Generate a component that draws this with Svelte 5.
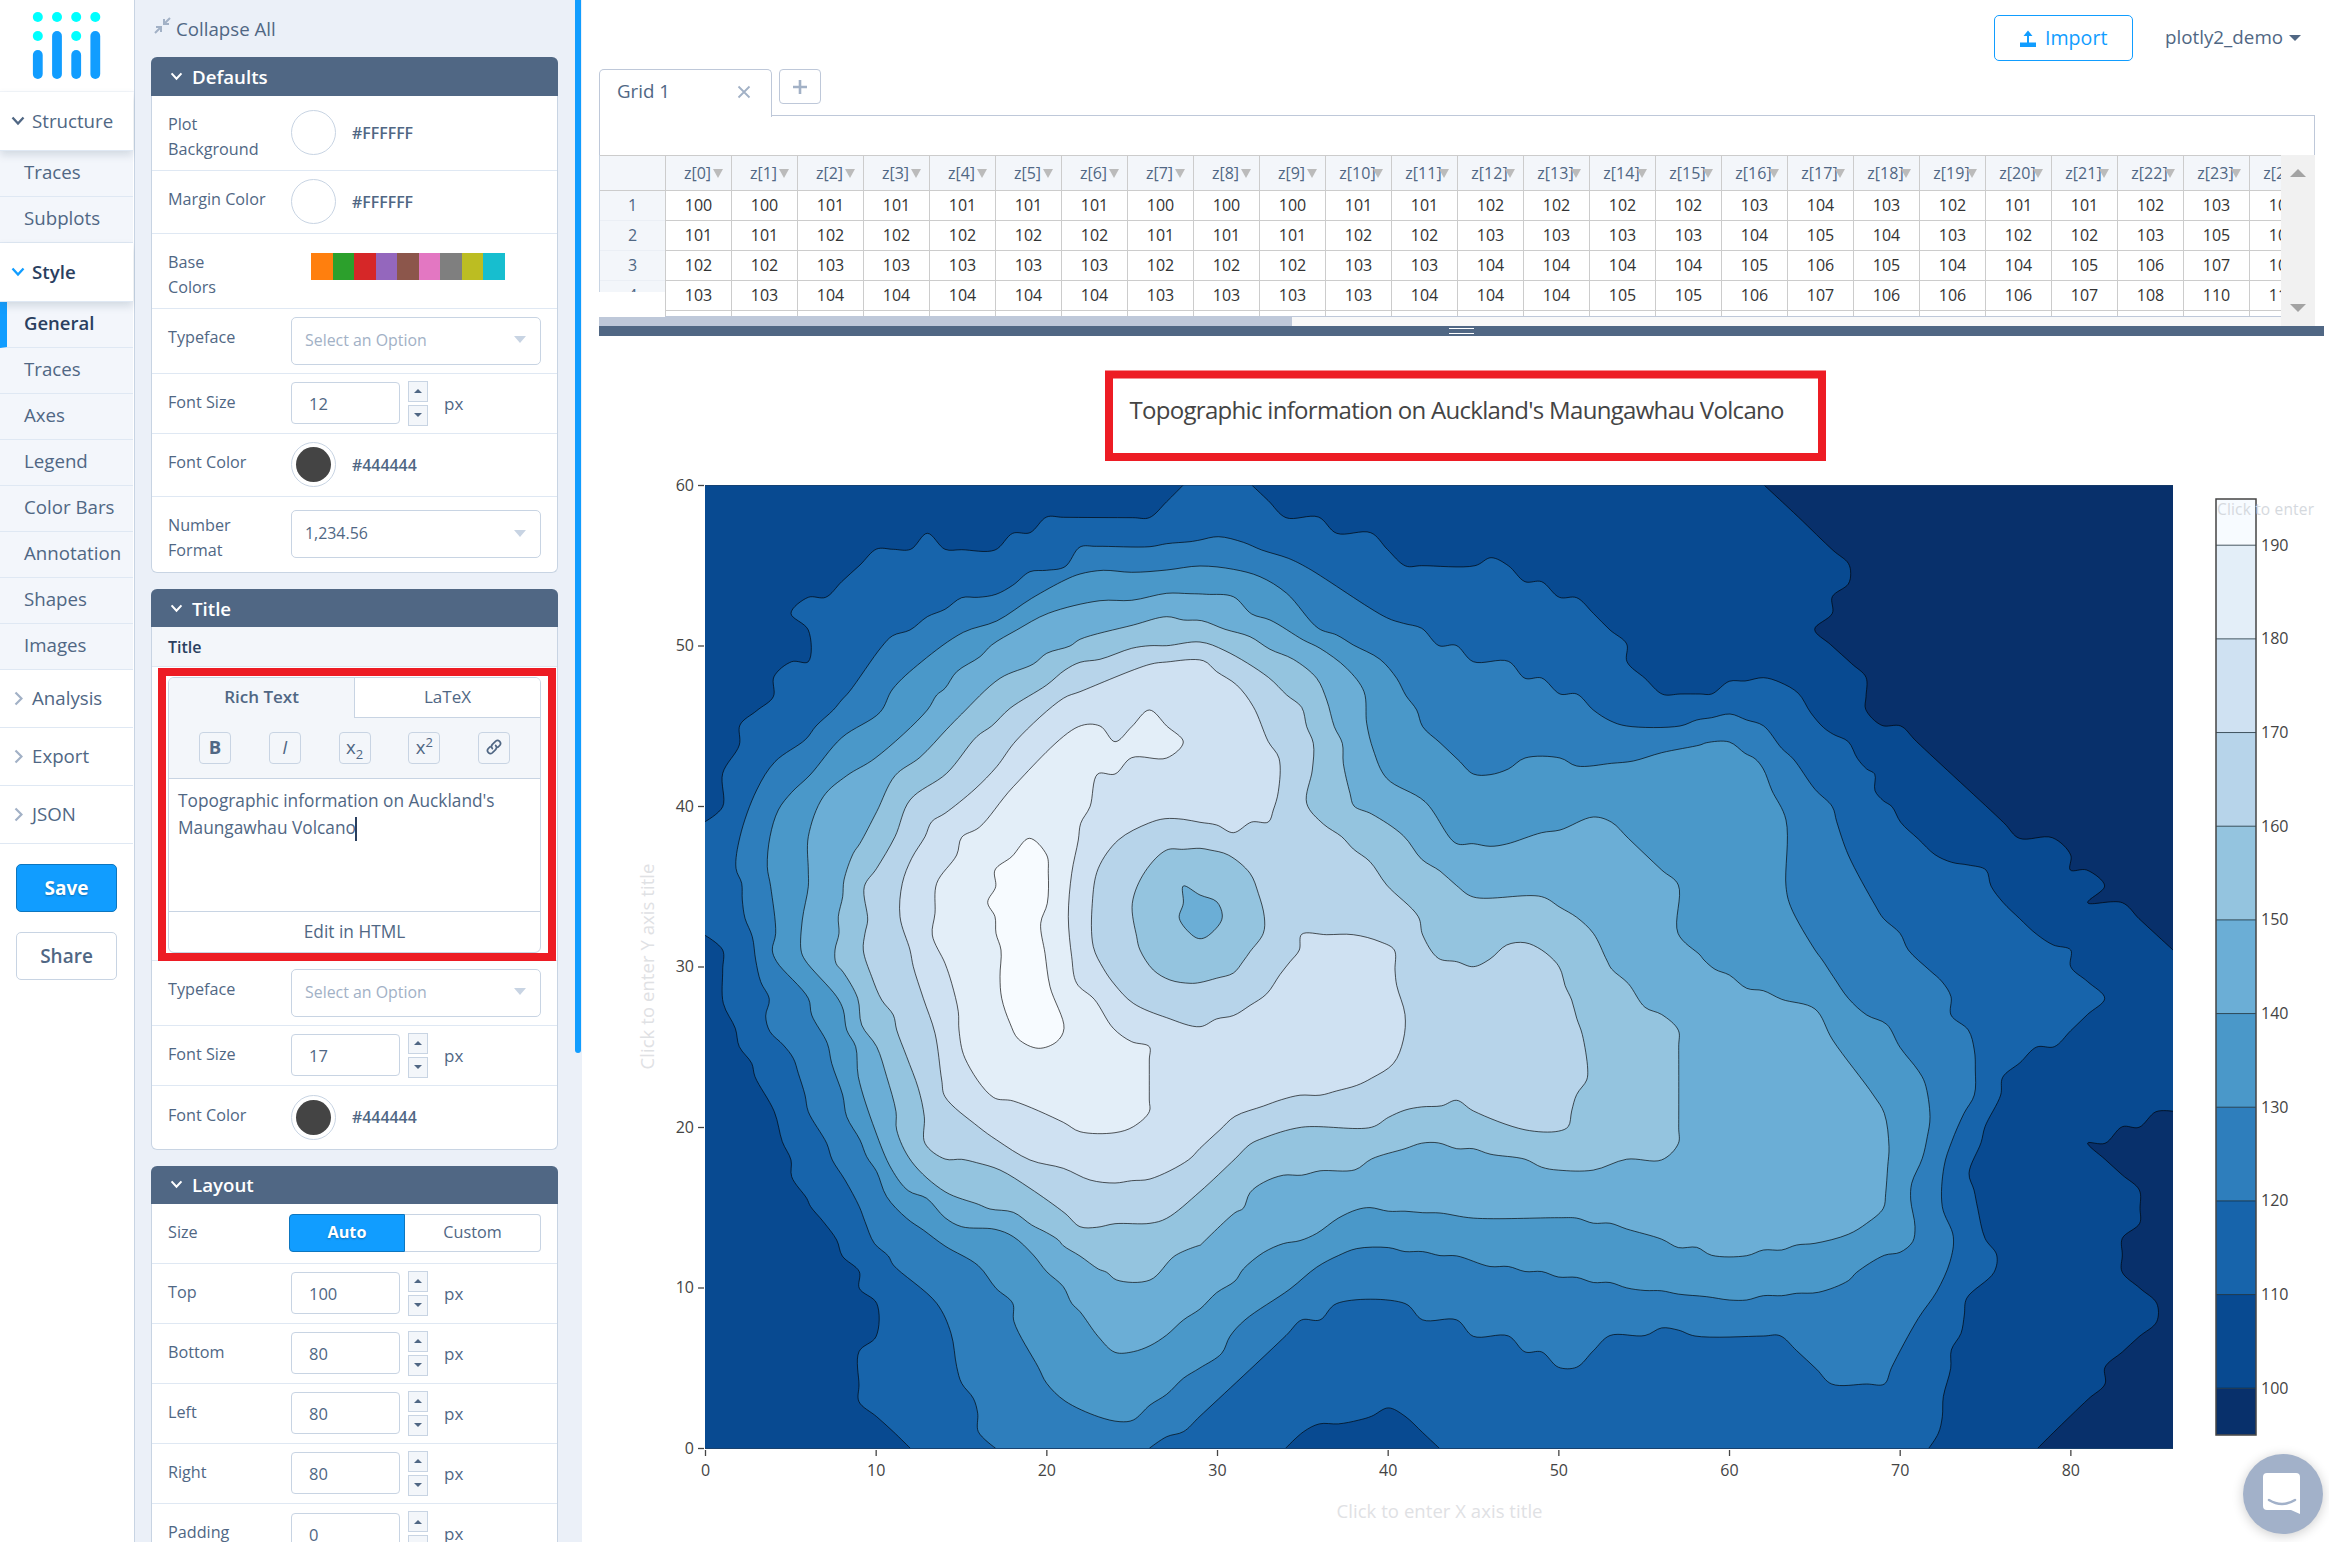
<script>
  const structure = ['Traces', 'Subplots'];
  const style = ['General', 'Traces', 'Axes', 'Legend', 'Color Bars', 'Annotation', 'Shapes', 'Images'];
  const closed = ['Analysis', 'Export', 'JSON'];
  const swatches = ['#ff7f0e', '#2ca02c', '#d62728', '#9467bd', '#8c564b', '#e377c2', '#7f7f7f', '#bcbd22', '#17becf'];
  const margins = [['Top', 100], ['Bottom', 80], ['Left', 80], ['Right', 80], ['Padding', 0]];

  const grid = [
    '100 100 101 101 101 101 101 100 100 100 101 101 102 102 102 102 103 104 103 102 101 101 102 103 104',
    '101 101 102 102 102 102 102 101 101 101 102 102 103 103 103 103 104 105 104 103 102 102 103 105 106',
    '102 102 103 103 103 103 103 102 102 102 103 103 104 104 104 104 105 106 105 104 104 105 106 107 108',
    '103 103 104 104 104 104 104 103 103 103 103 104 104 104 105 105 106 107 106 106 106 107 108 110 111',
    '                        '
  ].map((r) => r.split(' '));

  // Contours are digitised on six sheets: [x offset, y offset, y stretch], three units per pixel.
  const sheets = {
    a: [-45, -45, 1], b: [1485, -45, 1], c: [2955, -45, 1],
    d: [-45, 1425, 1], e: [1485, 1425, 1.0906], f: [2955, 1425, 1]
  };

  function points(src) {
    let s = sheets.a;
    const out = [];
    for (const t of src.trim().split(/\s+/)) {
      if (sheets[t]) s = sheets[t];
      else {
        const [x, y] = t.split(',').map(Number);
        out.push([705 + (x + s[0]) / 3, 485 + (y * s[2] + s[1]) / 3]);
      }
    }
    return out;
  }

  // Centripetal spline handles on both sides of p
  function handles(a, p, b) {
    const d1 = [a[0] - p[0], a[1] - p[1]];
    const d2 = [b[0] - p[0], b[1] - p[1]];
    const m1 = Math.sqrt(Math.hypot(...d1)) || 0.01;
    const m2 = Math.sqrt(Math.hypot(...d2)) || 0.01;
    const n = [m2 * m2 * d1[0] - m1 * m1 * d2[0], m2 * m2 * d1[1] - m1 * m1 * d2[1]];
    const q1 = 3 * m2 * (m1 + m2);
    const q2 = 3 * m1 * (m1 + m2);
    return [[p[0] + n[0] / q1, p[1] + n[1] / q1], [p[0] - n[0] / q2, p[1] - n[1] / q2]];
  }

  function spline(src, loop) {
    const p = points(src);
    const n = p.length;
    const h = p.map((q, i) => {
      if (!loop && (i === 0 || i === n - 1)) return [q, q];
      return handles(p[(i - 1 + n) % n], q, p[(i + 1) % n]);
    });
    let d = 'M' + p[0].map((v) => v.toFixed(1));
    for (let i = 1; i < n + (loop ? 1 : 0); i++) {
      const k = i % n;
      d += 'C' + [...h[i - 1][1], ...h[k][0], ...p[k]].map((v) => v.toFixed(1)).join(' ');
    }
    return d;
  }

  const low1 = 'c 222,45 325,141 429,241 475,280 482,310 475,342 427,380 427,430 374,478 422,524 485,581 528,622 528,680 527,718 575,766 632,768 680,815 941,1058 988,1105 1087,1103 1142,1155 1141,1200 1190,1200 1244,1248 1193,1298 1297,1298 1347,1346 1400,1395 1449,1440';
  const low2 = 'f 1449,454 1398,455 1347,502 1297,500 1245,550 1193,549 1245,598 1297,645 1348,690 1350,745 1349,790 1297,835 1297,885 1296,935 1350,985 1400,1030 1400,1085 1347,1130 1297,1176 1245,1222 1245,1272 1195,1317 1090,1418 1043,1465';
  const top110 = 'a 45,1055 98,1010 98,910 148,825 150,765 200,722 250,680 252,620 305,575 355,575 355,480 303,430 355,382 407,382 455,335 510,285 560,237 610,238 662,238 712,190 765,238 815,239 915,240 968,190 1020,188 1070,141 1120,142 1328,143 1378,143 1430,95 1480,45';
  const right110 = 'b 155,45 205,92 258,143 355,141 410,190 512,188 562,238 617,288 665,287 825,287 873,263 925,287 975,335 1025,335 1078,382 1130,383 1180,430 1230,480 1280,522 1281,575 1335,625 1388,673 1440,672 c 30,672 65,672 118,634 165,633 220,623 270,637 325,670 362,728 400,772 430,793 475,815 502,865 530,897 554,912 555,962 580,992 606,1010 632,1057 685,1107 735,1154 785,1177 835,1185 888,1200 903,1248 940,1298 988,1345 1040,1393 1090,1425 1142,1440 f 1142,20 1193,65 1244,115 1193,163 1142,212 1093,260 1040,261 990,308 938,352 932,405 885,500 873,548 837,640 852,690 863,745 885,835 920,885 912,937 830,1015 823,1065 813,1120 784,1170 782,1225 760,1310 757,1370 745,1420 716,1465';
  const left110 = 'd 661,1465 610,1415 560,1370 507,1325 507,1275 507,1175 558,1130 560,1030 508,985 508,935 457,888 440,840 400,785 362,740 350,715 305,650 303,600 277,545 253,455 195,350 185,310 148,260 136,205 100,130 98,30 a 98,1440 45,1396';
  const hole110 = 'e 257,1343 310,1298 358,1276 415,1276 475,1266 515,1255 565,1232 615,1255 668,1300 718,1343';
  const l120 = 'd 917,1465 865,1415 863,1360 850,1315 815,1270 800,1220 783,1120 740,1030 610,915 595,888 553,850 525,785 508,740 465,660 427,600 410,550 355,455 345,405 325,340 310,295 280,255 240,215 227,168 238,118 212,65 197,0 a 187,1400 165,1345 157,1290 155,1240 138,1195 150,1100 200,960 255,875 347,808 378,768 430,720 455,690 478,665 575,530 608,497 660,480 712,440 765,418 815,383 865,382 918,373 968,346 1020,305 1070,301 1125,290 1170,231 1220,229 1380,230 1430,221 1500,215 b 0,210 55,200 130,217 185,240 265,265 325,295 560,443 610,460 665,475 717,527 768,526 820,575 925,574 975,625 1025,624 1080,672 1130,672 1180,720 1230,752 1280,768 1440,768 1490,750 c 65,743 120,732 170,750 220,767 275,835 310,867 375,958 427,1010 440,1055 475,1155 555,1305 580,1345 630,1390 655,1440 f 718,30 757,66 783,110 783,165 835,210 853,270 856,330 853,405 822,460 785,545 762,620 757,740 790,830 780,905 740,995 685,1075 605,1222 583,1272 530,1272 425,1272 380,1228 320,1172 270,1127 220,1128 15,1128 e 1435,1018 1385,1012 1335,1033 1230,1033 1180,1075 1130,1120 1075,1120 1025,1078 975,1078 925,1034 820,1035 770,990 668,990 615,945 410,945 360,990 305,990 258,1033 0,1255 d 1480,1415 1430,1430 1378,1465';
  const loops = [
    ['#4a98c9', 'a 242,1250 232,1190 240,1100 265,1020 305,967 360,915 455,803 570,727 608,657 695,575 820,487 920,453 1025,385 1125,330 1170,312 1240,301 1325,307 1430,300 b 0,288 100,298 180,320 260,370 355,475 410,495 460,525 540,568 590,625 618,677 650,720 668,770 720,818 775,870 820,912 870,914 925,897 975,864 1080,864 1130,888 1235,880 1300,873 1385,848 c 30,825 50,818 118,816 165,850 195,866 220,897 245,960 288,1050 288,1250 302,1310 375,1440 f 397,0 430,50 475,115 530,165 590,193 630,262 685,332 705,370 720,470 712,530 697,595 665,670 662,720 675,800 668,845 630,877 583,886 500,937 475,962 385,997 320,1000 275,1007 220,1007 170,1020 118,1020 50,1010 e 1435,919 1385,910 1335,909 1280,902 1230,887 1180,887 1130,873 1075,872 1025,857 975,857 925,843 870,843 770,814 720,813 668,802 615,802 565,791 470,794 415,813 350,845 270,905 135,990 90,1035 65,1082 0,1122 d 1480,1255 1430,1303 1380,1335 1330,1380 1290,1385 1225,1370 1125,1323 1070,1270 1045,1222 972,1085 968,1030 918,985 865,917 765,858 700,810 650,775 590,710 560,635 530,590 510,540 470,470 458,405 425,310 412,250 365,165 355,115 260,5 a 247,1440 257,1390'],
    ['#6baed6', 'a 355,1250 355,1200 355,1100 400,980 470,917 555,865 712,720 740,675 765,655 800,605 870,560 905,525 980,480 1075,430 1230,392 1325,391 1430,370 1500,371 b 20,373 100,380 155,432 210,450 310,510 360,535 440,595 492,665 500,760 520,840 560,925 675,995 768,1120 820,1121 870,1129 920,1122 1025,1088 1080,1080 1180,1041 1235,1057 1285,1105 1385,1200 1435,1245 1434,1390 1500,1455 f 42,0 75,28 118,45 170,85 220,92 275,118 375,147 428,240 550,405 583,460 597,560 593,620 587,700 580,745 530,790 475,823 375,850 320,855 275,870 220,870 170,887 65,886 20,862 e 1435,791 1385,768 1280,740 1230,724 1180,724 1130,710 1075,709 820,710 720,696 668,695 615,691 565,691 510,681 470,687 415,710 350,752 300,772 250,780 190,805 130,850 105,883 50,915 0,960 d 1480,1080 1430,1125 1380,1157 1330,1175 1275,1177 1225,1130 1170,1055 1145,1030 1120,980 1070,935 1030,885 970,830 915,808 815,800 765,773 710,715 655,692 605,628 555,510 505,350 497,260 470,210 460,150 440,110 345,0 a 333,1440 337,1350'],
    ['#94c4df', 'a 447,1390 445,1340 458,1280 462,1230 490,1150 510,1120 560,1025 615,917 690,862 770,778 815,732 930,625 1030,582 1070,550 1140,528 1170,508 1330,465 1430,440 1480,450 b 5,452 75,478 150,500 210,538 280,568 350,625 380,690 403,770 427,820 430,880 450,970 462,1008 515,1032 610,1097 665,1168 720,1203 770,1247 820,1281 1025,1280 1080,1312 1130,1342 1180,1390 1220,1470 e 1235,25 1285,65 1335,130 1385,150 1435,193 1436,240 1436,460 1435,505 1385,550 1280,548 1180,578 1075,578 1025,570 975,548 870,534 820,519 770,519 715,503 665,504 615,519 515,547 465,577 360,580 305,592 250,592 190,612 150,640 130,683 105,695 0,785 d 1530,856 1455,887 1380,960 1280,960 1250,937 1225,927 1170,888 1120,857 1105,840 1070,818 1025,795 970,757 900,747 865,733 765,695 665,605 620,510 618,455 590,350 560,260 515,195 503,115 460,37 438,10 a 435,1440'],
    ['#b7d4ea', 'a 533,1350 523,1250 560,1195 615,1100 660,990 770,910 860,800 905,768 960,715 1070,645 1125,600 1170,577 1230,568 1325,535 1380,527 1430,527 b 0,516 75,542 205,622 260,675 305,712 320,770 340,820 337,900 320,1000 370,1062 425,1100 460,1137 510,1175 560,1245 655,1340 668,1395 715,1465 770,1475 820,1490 870,1467 920,1425 975,1418 1025,1440 1070,1480 e 1085,35 1095,70 1115,110 1130,160 1147,205 1163,300 1160,330 1130,370 1115,415 1105,458 1075,471 975,467 820,415 770,386 725,401 665,404 615,413 565,433 515,460 305,460 190,490 150,507 105,547 0,637 d 1430,775 1380,790 1275,791 1220,802 1170,800 1125,760 1020,685 930,630 860,608 815,598 765,597 705,550 703,470 685,385 650,290 620,210 610,165 575,120 545,50 a 520,1440 525,1390'],
    ['#cfe1f2', 'a 630,1340 637,1240 665,1165 705,1100 725,1055 765,1030 855,957 920,890 980,810 1120,685 1170,665 1380,583 1430,576 b 10,572 50,605 110,645 160,710 205,815 237,865 235,965 220,1020 205,1056 155,1056 100,1088 50,1065 0,1057 a 1480,1048 1425,1046 1375,1060 1285,1110 1225,1195 1207,1300 1210,1430 d 1240,25 1275,75 1330,130 1430,173 1530,200 e 50,162 100,153 150,125 200,93 240,40 270,5 b 298,1440 305,1393 380,1394 460,1394 540,1415 583,1440 585,1500 e 590,70 615,150 610,220 580,285 515,325 470,345 410,360 360,372 300,372 245,384 190,402 105,430 60,467 0,518 d 1495,600 1380,657 1325,662 1275,669 1200,660 1120,625 1020,600 920,540 865,500 765,410 755,360 735,220 700,115 670,20 a 660,1440'],
    ['#94c4df', 'a 1480,1138 1430,1140 1365,1205 1327,1300 1340,1400 1350,1440 d 1390,30 1440,60 1500,70 e 0,62 50,50 100,36 130,3 b 150,1445 190,1390 193,1340 175,1270 150,1210 85,1155 30,1140 0,1135'],
    ['#6baed6', 'a 1480,1248 1530,1275 b 50,1295 67,1335 60,1360 20,1400 0,1406 a 1510,1398 1468,1345 1480,1300'],
    ['#e3eef8', 'a 740,1240 800,1155 815,1102 868,1072 970,950 1165,770 1230,768 1275,815 1325,770 1378,720 1430,768 1480,816 1430,864 1325,863 1275,912 1223,912 1200,1010 1172,1060 1165,1110 1145,1210 1135,1340 1145,1460 d 1160,70 1213,118 1270,205 1325,245 1378,260 1378,300 1378,420 1378,455 1330,500 1275,518 1170,515 1120,487 970,423 910,412 825,295 807,210 805,155 785,70 765,10 a 727,1395 735,1330'],
    ['#f7fbff', 'a 915,1200 965,1160 1018,1105 1070,1155 1075,1210 1072,1300 1052,1360 1065,1450 d 1080,80 1122,205 1100,245 1045,265 985,237 960,190 935,115 930,50 a 933,1440 918,1390 915,1340 893,1297 917,1250']
  ].map(([fill, src]) => ({ fill, d: spline(src, true) + 'Z' }));

  const body110 = spline(top110) + spline(right110).replace('M', 'L') + spline(left110).replace('M', 'L') + 'Z';

  const scale = ['#f7fbff', '#e3eef8', '#cfe1f2', '#b7d4ea', '#94c4df', '#6baed6', '#4a98c9', '#2e7ebc', '#1764ab', '#084a91', '#08306b'];
  const barTop = (i) => (i === 0 ? 499 : 545.2 + (i - 1) * 93.67);
  const barH = (i) => (i === 0 || i === 10 ? 46.6 : 93.67);
</script>

{#snippet chevron()}
  <svg class="chev" viewBox="0 0 14 10"><path d="M1.5 1.5 7 7.5 12.5 1.5" /></svg>
{/snippet}

{#snippet select(text, empty)}
  <div class="select" class:empty><span>{text}</span><i></i></div>
{/snippet}

{#snippet number(value)}
  <div class="num">{value}</div>
  <div class="spin"><b><i class="up"></i></b><b><i class="down"></i></b></div>
  <span class="px">px</span>
{/snippet}

{#snippet color(value)}
  <div class="ring"><i class:dark={value === '#444444'}></i></div>
  <strong class="hex">{value}</strong>
{/snippet}

{#snippet head(text)}
  <header>{@render chevron()}<span>{text}</span></header>
{/snippet}

<div class="app">
  <nav>
    <div class="logo">
      <svg width="134" height="92" viewBox="0 0 134 92">
        <g fill="#0ff">
          <circle cx="37.8" cy="17" r="5" /><circle cx="57" cy="17" r="5" /><circle cx="76.2" cy="17" r="5" /><circle cx="95.3" cy="17" r="5" />
          <circle cx="37.8" cy="36" r="5" /><circle cx="76.2" cy="36" r="5" />
        </g>
        <g fill="#119dff">
          <rect x="32.9" y="50" width="9.8" height="29" rx="4.9" /><rect x="52.1" y="31" width="9.8" height="48" rx="4.9" />
          <rect x="71.3" y="50" width="9.8" height="29" rx="4.9" /><rect x="90.4" y="31" width="9.8" height="48" rx="4.9" />
        </g>
      </svg>
    </div>
    <div class="group">{@render chevron()}Structure</div>
    {#each structure as s}<div class="item">{s}</div>{/each}
    <div class="group open">{@render chevron()}Style</div>
    {#each style as s, i}<div class="item" class:active={i === 0}>{s}</div>{/each}
    {#each closed as s}
      <div class="group shut"><svg class="side" viewBox="0 0 9 15"><path d="M1.5 1.5 7.5 7.5 1.5 13.5" /></svg>{s}</div>
    {/each}
    <div class="buttons"><button class="save">Save</button><button>Share</button></div>
  </nav>

  <aside>
    <div class="collapse">
      <svg width="17" height="17" viewBox="0 0 17 17"><path d="M16 1 10.5 6.5M10 2v5h5M1 16l5.500-5.500M2 10h5v5" /></svg>
      Collapse All
    </div>
    <section>
      {@render head('Defaults')}
      <div class="row r75 two"><label>Plot Background</label>{@render color('#FFFFFF')}</div>
      <div class="row r63"><label>Margin Color</label>{@render color('#FFFFFF')}</div>
      <div class="row r75 two"><label>Base<br />Colors</label>
        <div class="swatches">{#each swatches as c}<i style="background:{c}"></i>{/each}</div>
      </div>
      <div class="row r65"><label>Typeface</label>{@render select('Select an Option', true)}</div>
      <div class="row r60"><label>Font Size</label>{@render number(12)}</div>
      <div class="row r63"><label>Font Color</label>{@render color('#444444')}</div>
      <div class="row r76 two"><label>Number Format</label>{@render select('1,234.56', false)}</div>
    </section>
    <section>
      {@render head('Title')}
      <div class="sub">Title</div>
      <div class="edit-row">
        <div class="editor">
          <div class="tabs"><b>Rich Text</b><span>LaTeX</span></div>
          <div class="tools">
            <i><b>B</b></i><i><em>I</em></i><i><span>x<sub>2</sub></span></i><i><span>x<sup>2</sup></span></i>
            <i><svg width="18" height="18" viewBox="0 0 18 18"><path d="M7.400 10.600a3 3 0 0 1 0-4.200l3.300-3.300a3 3 0 0 1 4.200 4.200L13 9.200M10.600 7.400a3 3 0 0 1 0 4.200l-3.300 3.300a3 3 0 0 1-4.200-4.200L5 8.800" /></svg></i>
          </div>
          <div class="text">Topographic information on Auckland's Maungawhau Volcano<i></i></div>
          <div class="html">Edit in HTML</div>
        </div>
        <div class="mark"></div>
      </div>
      <div class="row r65"><label>Typeface</label>{@render select('Select an Option', true)}</div>
      <div class="row r60"><label>Font Size</label>{@render number(17)}</div>
      <div class="row r63"><label>Font Color</label>{@render color('#444444')}</div>
    </section>
    <section>
      {@render head('Layout')}
      <div class="row r60"><label>Size</label>
        <div class="toggle"><b>Auto</b><span>Custom</span></div>
      </div>
      {#each margins as [name, v]}
        <div class="row r60"><label>{name}</label>{@render number(v)}</div>
      {/each}
    </section>
    <div class="scroll"></div>
  </aside>

  <main>
    <div class="top">
      <div class="gridtabs">
        <div class="tab"><span>Grid 1</span><svg width="14" height="14" viewBox="0 0 14 14"><path d="M1.500 1.500 12.500 12.500M12.500 1.500 1.500 12.500" /></svg></div>
        <div class="plus"><svg width="14" height="14" viewBox="0 0 14 14"><path d="M7 0V14M0 7H14" /></svg></div>
      </div>
      <div class="import">
        <svg width="18" height="18" viewBox="0 0 18 18"><path d="M1 12.500h16V17H1zM8 14V6H4.500L9 .5 13.500 6H10v8z" /></svg>Import
      </div>
      <div class="user">plotly2_demo<i></i></div>
    </div>
    <div class="sheet">
      <div class="blank"></div>
      <div class="cols">
        <div class="rowheads">
          <div class="rh first"></div>
          {#each [1, 2, 3, 4] as n}<div class="rh">{n}</div>{/each}
        </div>
        <div class="cells">
          <div class="line th">{#each grid[0] as _, i}<div><span>z[{i}]</span><i></i></div>{/each}</div>
          {#each grid as row}<div class="line">{#each row as v}<div>{v}</div>{/each}</div>{/each}
        </div>
        <div class="vbar"><i class="u"></i><i class="d"></i></div>
      </div>
    </div>
    <div class="hbar"><i></i></div>
    <div class="split"><i></i></div>

    <svg class="chart" width="1745" height="1206" viewBox="584 336 1745 1206">
      <text class="title" x="1457" y="419" text-anchor="middle" textLength="655">Topographic information on Auckland's Maungawhau Volcano</text>
      <rect x="1109" y="374.500" width="713" height="82.500" fill="none" stroke="#ed1c24" stroke-width="8" />
      <clipPath id="plot"><rect x="705" y="485" width="1468" height="964" /></clipPath>
      <g clip-path="url(#plot)">
        <rect x="705" y="485" width="1468" height="964" fill="#084a91" />
        <path d={spline(low1) + 'L2173 485Z'} fill="#08306b" />
        <path d={spline(low2) + 'L2173 1449Z'} fill="#08306b" />
        <path d={body110} fill="#1764ab" />
        <path d={spline(hole110) + 'Z'} fill="#084a91" />
        <path d={spline(l120) + 'Z'} fill="#2e7ebc" />
        {#each loops as l}<path class="iso" d={l.d} fill={l.fill} />{/each}
        {#each [low1, low2, top110, right110, left110, hole110, l120] as src}
          <path class="iso" d={spline(src)} fill="none" />
        {/each}
        <path d="M705 485.300H2173M705 1448.500H2173" stroke="#1c3f66" stroke-width="1" opacity=".8" />
      </g>
      {#each [0, 10, 20, 30, 40, 50, 60, 70, 80] as v}
        <path class="tick" d="M{705.5 + v * 17.067} 1450v6" />
        <text class="ax" x={705.5 + v * 17.067} y="1475.500" text-anchor="middle">{v}</text>
      {/each}
      {#each [0, 10, 20, 30, 40, 50, 60] as v}
        <path class="tick" d="M698 {1448.500 - v * 16.05}h6" />
        <text class="ax" x="694" y={1453.500 - v * 16.05} text-anchor="end">{v}</text>
      {/each}
      <text class="hint" x="1439.500" y="1518" text-anchor="middle" textLength="206">Click to enter X axis title</text>
      <text class="hint" transform="translate(654 966.5) rotate(-90)" text-anchor="middle" textLength="206">Click to enter Y axis title</text>

      {#each scale as c, i}
        <rect x="2216" y={barTop(i)} width="40" height={barH(i)} fill={c} />
        {#if i > 0}
          <path d="M2216 {barTop(i)}h40" stroke="#10242f" stroke-width="1" opacity=".75" />
          <text class="ax" x="2261" y={barTop(i) + 5.500}>{200 - i * 10}</text>
        {/if}
      {/each}
      <rect x="2216" y="499" width="40" height="936" fill="none" stroke="#444" stroke-width="1.500" />
      <text class="hint small" x="2217" y="514.500" textLength="97">Click to enter</text>
    </svg>
  </main>
  <div class="chat">
    <svg width="42" height="44" viewBox="0 0 42 44"><path d="M5 1h29a4 4 0 0 1 4 4v37l-9-4H5a4 4 0 0 1-4-4V5a4 4 0 0 1 4-4z" fill="#fff" /><path d="M7 28q13 8 26 0" fill="none" stroke="#a2b1c9" stroke-width="2.500" stroke-linecap="round" /></svg>
  </div>
</div>

<style>
  :global(body) { margin: 0; background: #fff; overflow: hidden; }
  .app { display: flex; width: 2329px; height: 1542px; overflow: hidden; position: relative; font-family: 'Open Sans', sans-serif; color: #506784; font-size: 16px; }
  .app * { box-sizing: border-box; }
  svg { display: block; flex: none; }

  nav { width: 135px; flex: none; border-right: 1px solid #c8d4e3; font-size: 18.7px; line-height: 1; }
  .logo { height: 92px; border-bottom: 1px solid #f3f6fa; }
  .group { height: 59px; width: 133px; display: flex; align-items: center; padding-left: 11px; gap: 7px; border-bottom: 1px solid #dfe8f3; background: #fff; box-shadow: 0 4px 8px rgba(80, 103, 132, .2); position: relative; }
  .chev { width: 14px; height: 10px; fill: none; stroke: currentColor; stroke-width: 2.3; }
  .group.open { color: #2a3f5f; font-weight: 600; }
  .group.open .chev { stroke: #119dff; }
  .group.shut { box-shadow: none; height: 58px; padding-left: 14px; gap: 9px; }
  .side { width: 9px; height: 15px; fill: none; stroke: #a2b1c6; stroke-width: 2.2; }
  .item { height: 46px; width: 133px; display: flex; align-items: center; padding: 0 0 2px 24px; background: #f3f6fb; border-bottom: 1px solid #dfe8f3; white-space: nowrap; }
  .item.active { color: #2a3f5f; font-weight: 600; border-left: 7px solid #119dff; padding-left: 17px; font-size: 18.500px; }
  .buttons { display: flex; flex-direction: column; gap: 20px; padding: 20px 0 0 16px; }
  button { width: 101px; height: 48px; border: 1px solid #c8d4e3; border-radius: 5px; background: #fff; font: 600 19px 'Open Sans', sans-serif; color: #506784; padding: 0; }
  .save { background: #119dff; border-color: #0d76bf; color: #fff; font-weight: 700; text-shadow: 0 1px 2px rgba(0, 0, 0, .3); }

  aside { width: 447px; flex: none; background: #ebf0f8; padding: 0 24px 0 16px; position: relative; height: 1542px; overflow: hidden; }
  .collapse { height: 57px; display: flex; align-items: center; font-size: 18.7px; padding-left: 3px; gap: 5px; }
  .collapse svg { margin-top: -6px; fill: none; stroke: #a2b1c6; stroke-width: 2; }
  section { width: 407px; border: 1px solid #c8d4e3; border-top: 0; border-radius: 6px; background: #fff; margin-bottom: 16px; }
  header { height: 37.700px; margin: 0 -1px; background: #506784; color: #fff; border-radius: 6px 6px 0 0; display: flex; align-items: center; padding-left: 19px; gap: 9px; font-size: 18.700px; font-weight: 600; }
  .collapse + section header { height: 38.700px; }
  header .chev { width: 13px; height: 9px; }
  .row { display: flex; align-items: center; padding-left: 16px; border-bottom: 1px solid #dfe8f3; }
  .row:last-child { border-bottom: 0; }
  .r75 { height: 75px; }
  .r63 { height: 63px; }
  .r65 { height: 65px; }
  .r60 { height: 60px; }
  .r76 { height: 75.500px; }
  label { width: 102px; margin-right: 21px; font-size: 16.2px; line-height: 25px; flex: none; position: relative; top: -2px; }
  .two label { top: 4px; }
  .r60 label { top: -1px; }
  .r65 label { top: -3px; }
  .ring { width: 45px; height: 45px; border: 1px solid #c8d4e3; border-radius: 50%; padding: 4px; flex: none; }
  .ring i { display: block; width: 35px; height: 35px; border-radius: 50%; background: #fff; }
  .ring .dark { background: #444; }
  .hex { margin-left: 16px; font-weight: 600; font-size: 15.900px; }
  .swatches { display: flex; margin: -8px 0 0 20px; height: 27px; }
  .swatches i { width: 21.55px; }
  .select { width: 250px; height: 48px; border: 1px solid #c8d4e3; border-radius: 5px; display: flex; justify-content: space-between; align-items: center; padding: 0 14px 0 13px; font-size: 15.900px; }
  .select span { margin-top: -2px; }
  .empty { color: #a2b1c6; }
  .select i { border: 6.500px solid transparent; border-top: 7px solid #c8d4e3; border-bottom: 0; margin-top: -2px; }
  .num { width: 109px; height: 42px; border: 1px solid #c8d4e3; border-radius: 4px; padding: 9px 0 0 17px; line-height: 24px; font-size: 16.500px; }
  .spin { display: flex; flex-direction: column; gap: 3px; margin-left: 8px; }
  .spin b { width: 20px; height: 21px; border: 1px solid #c8d4e3; background: #f3f6fa; display: flex; align-items: center; justify-content: center; }
  .up, .down { border: 4px solid transparent; }
  .up { border-bottom-color: #506784; border-top: 0; }
  .down { border-top-color: #506784; border-bottom: 0; }
  .px { margin-left: 16px; font-size: 17px; }
  .sub { height: 40px; background: #f3f6fa; border-bottom: 1px solid #dfe8f3; padding-left: 16px; line-height: 41px; color: #2a3f5f; font-weight: 600; }
  .edit-row { height: 294px; padding: 10px 0 0 16px; border-bottom: 1px solid #dfe8f3; position: relative; }
  .mark { position: absolute; left: 6px; top: 1.500px; width: 398px; height: 293px; border: 8px solid #ed1c24; }
  .editor { width: 373px; height: 276px; border: 1px solid #c8d4e3; border-radius: 6px; overflow: hidden; background: #fff; font-size: 17px; }
  .tabs { display: flex; height: 40px; background: #f3f6fa; text-align: center; line-height: 38px; }
  .tabs b { width: 185px; font-weight: 600; }
  .tabs span { flex: 1; background: #fff; border-left: 1px solid #c8d4e3; border-bottom: 1px solid #c8d4e3; }
  .tools { height: 61px; background: #f3f6fa; border-bottom: 1px solid #c8d4e3; display: flex; padding: 14px 30px 0; justify-content: space-between; }
  .tools i { width: 32px; height: 32px; border: 1px solid #c8d4e3; border-radius: 4px; display: flex; align-items: center; justify-content: center; font-style: normal; font-size: 18.500px; line-height: 1; padding-bottom: 2px; }
  .tools em { font-style: italic; }
  .tools sub, .tools sup { font-size: 13px; line-height: 0; }
  .tools svg { fill: none; stroke: #506784; stroke-width: 1.7; stroke-linecap: round; }
  .text { height: 133px; padding: 8px 9px; line-height: 27px; font-size: 17.300px; border-bottom: 1px solid #c8d4e3; }
  .text i { display: inline-block; width: 2px; height: 24px; margin: -4px 0 -7px -1px; background: #2a3f5f; }
  .html { text-align: center; line-height: 39px; font-size: 17.300px; }
  .toggle { display: flex; width: 252px; height: 38px; margin-left: -2px; text-align: center; line-height: 34px; font-size: 16.200px; }
  .toggle b { width: 116px; background: #119dff; border: 1px solid #0d76bf; border-radius: 4px 0 0 4px; color: #fff; font-weight: 700; text-shadow: 0 1px 2px rgba(0, 0, 0, .3); }
  .toggle span { flex: 1; border: 1px solid #c8d4e3; border-left: 0; border-radius: 0 4px 4px 0; }
  .scroll { position: absolute; left: 440px; top: -4px; width: 6px; height: 1057px; border-radius: 3px; background: #119dff; }

  main { width: 1747px; flex: none; padding-left: 17px; }
  .top { height: 116px; display: flex; align-items: flex-start; position: relative; }
  .gridtabs { display: flex; align-items: flex-start; gap: 7px; padding-top: 69px; width: 1395px; }
  .tab { width: 173px; height: 48px; position: relative; z-index: 1; margin-bottom: -1px; background: #fff; border: 1px solid #bec8d9; border-bottom: 0; border-radius: 5px 5px 0 0; display: flex; align-items: center; justify-content: space-between; padding: 0 20px 4px 17px; font-size: 18.700px; }
  .tab span { margin-top: -2px; }
  .tab svg, .plus svg { stroke: #a2b1c6; stroke-width: 1.800; }
  .plus svg { stroke-width: 2.600; }
  .plus { width: 42px; height: 35px; border: 1px solid #bec8d9; border-radius: 4px; display: flex; align-items: center; justify-content: center; }
  .import { width: 139px; height: 46px; margin-top: 15px; border: 1px solid #119dff; border-radius: 5px; color: #119dff; display: flex; align-items: center; gap: 8px; padding: 0 0 2px 24px; font-size: 19.600px; }
  .import svg { fill: #119dff; margin-top: 4px; }
  .user { margin: 24px 0 0 32px; font-size: 18.800px; display: flex; align-items: center; gap: 6px; line-height: 26px; white-space: nowrap; }
  .user i { border: 6px solid transparent; border-top: 6px solid #506784; border-bottom: 0; margin-top: 2px; }
  .sheet { width: 1716px; border-top: 1px solid #bec8d9; margin-top: -1px; }
  .blank { height: 39px; border: 1px solid #bec8d9; border-top: 0; border-bottom: 0; }
  .cols { display: flex; height: 162px; position: relative; }
  .rowheads { width: 66px; height: 137px; overflow: hidden; flex: none; border-left: 1px solid #c8d4e3; }
  .rh { height: 30px; background: #f3f6fa; border-bottom: 1px solid #ebeff5; text-align: center; line-height: 28px; }
  .rh.first { height: 36px; border-top: 1px solid #ccc; border-bottom: 1px solid #ccc; }
  .cells { width: 1616px; overflow: hidden; border-bottom: 1px solid #bec8d9; flex: none; }
  .line { display: flex; height: 30px; color: #333; }
  .line div { width: 66px; flex: none; border-left: 1px solid #ccc; border-bottom: 1px solid #ccc; text-align: center; line-height: 28px; }
  .th { height: 36px; color: #506784; }
  .th div { background: #f3f6fa; border-top: 1px solid #ccc; line-height: 34px; position: relative; }
  .th span { position: relative; left: -1px; }
  .th i { position: absolute; right: 8px; top: 13px; border: 5px solid transparent; border-top: 9px solid #bbb; border-bottom: 0; }
  .vbar { width: 34px; height: 171px; background: #f1f1f1; flex: none; display: flex; flex-direction: column; justify-content: space-between; align-items: center; padding: 14px 0 14px; position: relative; z-index: 1; }
  .u, .d { border: 8px solid transparent; }
  .u { border-bottom-color: #a3a3a3; border-top: 0; }
  .d { border-top-color: #a3a3a3; border-bottom: 0; }
  .hbar { height: 9px; width: 1682px; background: #f8f8f8; }
  .hbar i { display: block; width: 693px; height: 9px; background: #bec8d9; }
  .split { width: 1725px; height: 10px; background: #506784; display: flex; justify-content: center; align-items: center; position: relative; z-index: 2; }
  .split i { width: 25px; height: 6px; border-top: 1px solid #fff; border-bottom: 1px solid #fff; }
  .chart { margin-left: -15px; }
  .iso { stroke: #000; stroke-width: 1; stroke-opacity: .65; }
  .title { font-size: 24px; fill: #444; }
  .ax { font-size: 16px; fill: #444; }
  .tick { stroke: #444; stroke-width: 1.300; }
  .hint { font-size: 18.500px; fill: #dfe1e4; }
  .small { font-size: 15.500px; fill: #d5d9de; }
  .chat { position: absolute; left: 2243px; top: 1454px; width: 80px; height: 80px; border-radius: 50%; background: #a2b1c9; display: flex; align-items: center; justify-content: center; box-shadow: 0 2px 12px rgba(0, 0, 0, .2); }
</style>
